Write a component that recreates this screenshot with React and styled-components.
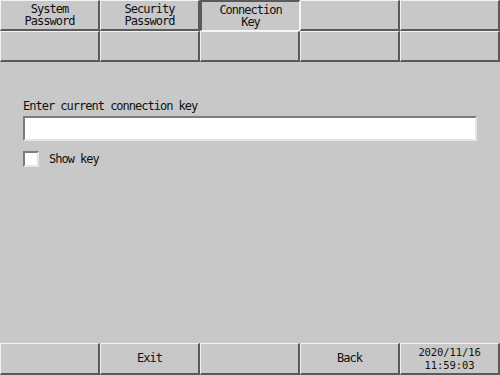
import React from "react";
import styled, { createGlobalStyle, css } from "styled-components";

const Global = createGlobalStyle`
  html, body { margin: 0; padding: 0; background: #c8c8c8; }
  * { box-sizing: border-box; }
`;

const Screen = styled.div`
  width: 500px;
  height: 375px;
  background: #c8c8c8;
  display: flex;
  flex-direction: column;
  font-family: "DejaVu Sans Mono", "Liberation Mono", monospace;
  font-size: 12px;
  letter-spacing: -1px;
  color: #101010;
  overflow: hidden;
`;

const ButtonGrid = styled.div`
  display: grid;
  grid-template-columns: repeat(5, 100px);
  grid-auto-rows: ${(p) => p.$rowH}px;
`;

const Key = styled.div`
  display: flex;
  flex-direction: column;
  align-items: center;
  justify-content: center;
  text-align: center;
  line-height: 12.5px;
  background: #c8c8c8;
  border-style: solid;
  border-width: 1px 2px 2px 1px;
  border-color: #f2f2f2 #5a5a5a #5a5a5a #f2f2f2;
  ${(p) =>
    p.$active &&
    css`
      border-width: 2px 1px 1px 2px;
      border-color: #5a5a5a #f8f8f8 #f8f8f8 #5a5a5a;
    `}
`;

const Clock = styled.span`
  display: block;
  font-size: 10.5px;
  line-height: 12.3px;
  letter-spacing: -0.1px;
`;

const Content = styled.div`
  flex: 1;
  padding: 37px 23px 0 23px;
  display: flex;
  flex-direction: column;
`;

const Label = styled.div`
  line-height: 14px;
  height: 14px;
`;

const Input = styled.div`
  margin-top: 3px;
  width: 454px;
  height: 25px;
  background: #fff;
  border-style: solid;
  border-width: 2px;
  border-color: #7c7c7c #e6e6e6 #e6e6e6 #7c7c7c;
`;

const CheckRow = styled.div`
  margin-top: 10px;
  display: flex;
  align-items: center;
  gap: 10px;
`;

const Box = styled.div`
  width: 16px;
  height: 16px;
  background: #fff;
  border-style: solid;
  border-width: 2px;
  border-color: #7c7c7c #e6e6e6 #e6e6e6 #7c7c7c;
`;

const CheckLabel = styled.span`
  line-height: 14px;
`;

export default function App() {
  return (
    <Screen>
      <Global />
      <ButtonGrid $rowH={31}>
        <Key>
          <span>System</span>
          <span>Password</span>
        </Key>
        <Key>
          <span>Security</span>
          <span>Password</span>
        </Key>
        <Key $active>
          <span>Connection</span>
          <span>Key</span>
        </Key>
        <Key />
        <Key />
        <Key />
        <Key />
        <Key />
        <Key />
        <Key />
      </ButtonGrid>
      <Content>
        <Label>Enter current connection key</Label>
        <Input />
        <CheckRow>
          <Box />
          <CheckLabel>Show key</CheckLabel>
        </CheckRow>
      </Content>
      <ButtonGrid $rowH={32}>
        <Key />
        <Key>Exit</Key>
        <Key />
        <Key>Back</Key>
        <Key>
          <Clock>2020/11/16</Clock>
          <Clock>11:59:03</Clock>
        </Key>
      </ButtonGrid>
    </Screen>
  );
}
